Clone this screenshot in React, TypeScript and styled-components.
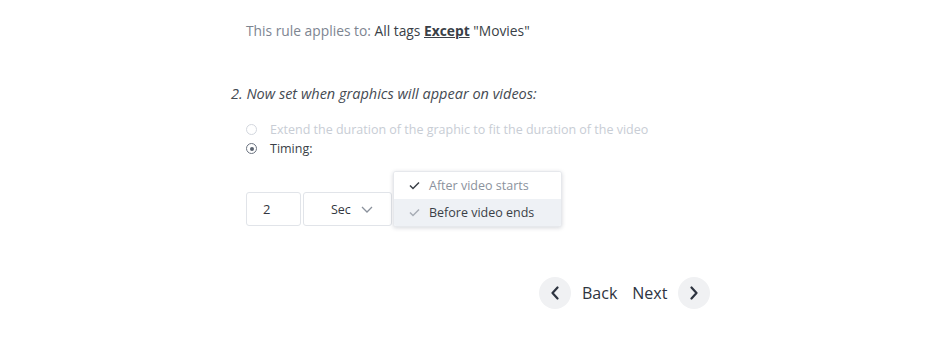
import styled, { createGlobalStyle } from "styled-components";

const GlobalStyle = createGlobalStyle`
  body {
    margin: 0;
    background: #ffffff;
    font-family: "Open Sans", "Noto Sans", sans-serif;
    color: #333740;
  }
`;

const Page = styled.div`
  width: 940px;
  height: 348px;
  padding: 21px 0 0 231px;
  box-sizing: border-box;
`;

const RuleLine = styled.div`
  margin-left: 15px;
  font-size: 13.8px;
  line-height: 20px;
  color: #3a3f47;
  span.muted {
    color: #7d8591;
  }
  b {
    text-decoration: underline;
    font-weight: 700;
  }
`;

const StepTitle = styled.div`
  margin-top: 43px;
  font-size: 14.5px;
  font-style: italic;
  line-height: 20px;
  color: #444a52;
`;

const Options = styled.div`
  margin: 16px 0 0 15px;
  display: flex;
  flex-direction: column;
`;

const Option = styled.label<{ $disabled?: boolean }>`
  display: flex;
  align-items: center;
  gap: 13px;
  height: 19px;
  font-size: 12.5px;
  color: ${(p) => (p.$disabled ? "#c8cdd5" : "#3a3f47")};
`;

const Radio = styled.span<{ $checked?: boolean; $disabled?: boolean }>`
  width: 9px;
  height: 9px;
  border-radius: 50%;
  border: 1.5px solid ${(p) => (p.$disabled ? "#d3d7de" : "#6b7380")};
  display: flex;
  align-items: center;
  justify-content: center;
  &::after {
    content: "";
    width: 4px;
    height: 4px;
    border-radius: 50%;
    background: ${(p) => (p.$checked ? "#5a6270" : "transparent")};
  }
`;

const Controls = styled.div`
  margin: 34px 0 0 15px;
  display: flex;
  align-items: flex-start;
  gap: 2px;
`;

const NumberBox = styled.div`
  width: 55px;
  height: 34px;
  box-sizing: border-box;
  border: 1px solid #e1e4e9;
  border-radius: 3px;
  padding-left: 16px;
  display: flex;
  align-items: center;
  font-size: 13px;
  color: #333740;
`;

const SelectBox = styled.div`
  width: 89px;
  height: 34px;
  box-sizing: border-box;
  border: 1px solid #e1e4e9;
  border-radius: 3px;
  padding-left: 27px;
  display: flex;
  align-items: center;
  gap: 10px;
  font-size: 12.5px;
  color: #333740;
`;

const MenuAnchor = styled.div`
  position: relative;
  width: 0;
`;

const Menu = styled.div`
  position: absolute;
  left: -1px;
  top: -21px;
  width: 167px;
  background: #ffffff;
  border: 1px solid #e6e8ec;
  border-radius: 3px;
  box-shadow: 0 1px 4px rgba(30, 40, 60, 0.18);
  overflow: hidden;
`;

const MenuItem = styled.div<{ $active?: boolean }>`
  display: flex;
  align-items: center;
  gap: 9px;
  height: 27px;
  padding-left: 15px;
  font-size: 12.5px;
  background: ${(p) => (p.$active ? "#eef1f5" : "#ffffff")};
  color: ${(p) => (p.$active ? "#3a3f47" : "#8b929d")};
`;

const Nav = styled.div`
  margin: 51px 0 0 308px;
  display: flex;
  align-items: center;
  gap: 11px;
`;

const CircleButton = styled.button`
  width: 32px;
  height: 32px;
  border-radius: 50%;
  border: none;
  background: #f0f1f3;
  padding: 0;
  display: flex;
  align-items: center;
  justify-content: center;
`;

const NavText = styled.span<{ $after?: number }>`
  font-size: 16px;
  color: #2e3440;
  margin-right: ${(p) => p.$after ?? 0}px;
`;

const Check = ({ color }: { color: string }) => (
  <svg width="11" height="9" viewBox="0 0 11 9">
    <path d="M1 4.5 L4 7.5 L10 1.5" fill="none" stroke={color} strokeWidth="1.5" />
  </svg>
);

const ChevronDown = () => (
  <svg width="12" height="7" viewBox="0 0 12 7">
    <path d="M1 1 L6 6 L11 1" fill="none" stroke="#8a919c" strokeWidth="1.3" />
  </svg>
);

const Chevron = ({ dir }: { dir: "left" | "right" }) => (
  <svg width="10" height="14" viewBox="0 0 10 14">
    <path
      d={dir === "left" ? "M7.5 1.5 L2.5 7 L7.5 12.5" : "M2.5 1.5 L7.5 7 L2.5 12.5"}
      fill="none"
      stroke="#2e3440"
      strokeWidth="2.2"
      strokeLinecap="round"
      strokeLinejoin="round"
    />
  </svg>
);

export default function App() {
  return (
    <>
      <GlobalStyle />
      <Page>
        <RuleLine>
          <span className="muted">This rule applies to: </span>
          All tags <b>Except</b> "Movies"
        </RuleLine>
        <StepTitle>2. Now set when graphics will appear on videos:</StepTitle>
        <Options>
          <Option $disabled>
            <Radio $disabled />
            Extend the duration of the graphic to fit the duration of the video
          </Option>
          <Option>
            <Radio $checked />
            Timing:
          </Option>
        </Options>
        <Controls>
          <NumberBox>2</NumberBox>
          <SelectBox>
            Sec
            <ChevronDown />
          </SelectBox>
          <MenuAnchor>
            <Menu>
              <MenuItem>
                <Check color="#3a3f47" />
                After video starts
              </MenuItem>
              <MenuItem $active>
                <Check color="#a7adb6" />
                Before video ends
              </MenuItem>
            </Menu>
          </MenuAnchor>
        </Controls>
        <Nav>
          <CircleButton>
            <Chevron dir="left" />
          </CircleButton>
          <NavText $after={4}>Back</NavText>
          <NavText>Next</NavText>
          <CircleButton>
            <Chevron dir="right" />
          </CircleButton>
        </Nav>
      </Page>
    </>
  );
}
